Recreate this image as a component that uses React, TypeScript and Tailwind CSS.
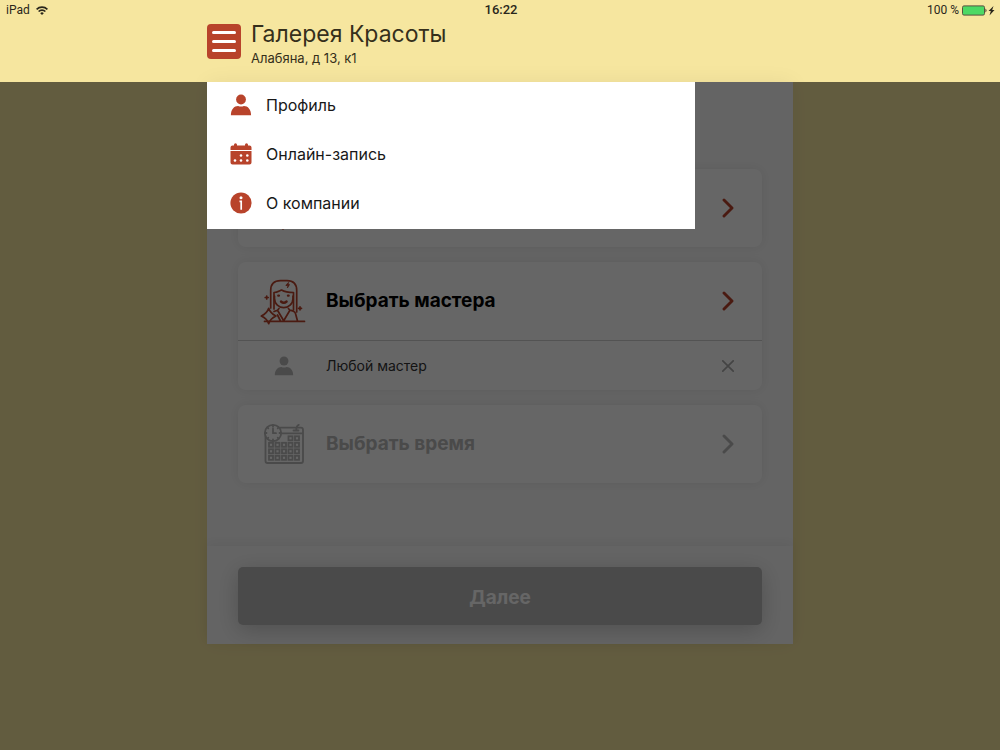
import type { ReactNode } from "react";

function Person({ className }: { className: string }) {
  return (
    <svg viewBox="0 0 22 22" className={className} fill="currentColor" aria-hidden="true">
      <circle cx="11" cy="5.500" r="4.900" />
      <path d="M.9 21.300c0-6 3.300-9.300 7.200-9.300 1.800.8 4 .8 5.800 0 3.900 0 7.200 3.300 7.200 9.300z" />
    </svg>
  );
}

function CalendarIcon() {
  return (
    <svg viewBox="0 0 22 22" className="size-[22px]" aria-hidden="true">
      <path fill="currentColor" d="M2.500 2.500H4V1.800a1.500 1.500 0 0 1 3 0v.7h8v-.7a1.500 1.500 0 0 1 3 0v.7h1.500a2 2 0 0 1 2 2V7h-21V4.500a2 2 0 0 1 2-2zM.5 8.100h21V19.500a2 2 0 0 1-2 2h-17a2 2 0 0 1-2-2z" />
      <g fill="#fff">
        <circle cx="11" cy="12.500" r="1.300" />
        <circle cx="17.300" cy="12.500" r="1.300" />
        <circle cx="5" cy="17.500" r="1.300" />
        <circle cx="11" cy="17.500" r="1.300" />
        <circle cx="17.300" cy="17.500" r="1.300" />
      </g>
    </svg>
  );
}

function InfoIcon() {
  return (
    <svg viewBox="0 0 22 22" className="size-[22px]" aria-hidden="true">
      <circle cx="11" cy="11" r="10.600" fill="currentColor" />
      <circle cx="11" cy="5.700" r="1.500" fill="#fff" />
      <path d="M9.500 9.300H11.200V17.800" fill="none" stroke="#fff" strokeWidth="1.700" />
    </svg>
  );
}

function Chevron() {
  return (
    <svg viewBox="0 0 12 20" className="h-5 w-3" fill="none" stroke="currentColor" strokeWidth="2.900" strokeLinecap="round" strokeLinejoin="round" aria-hidden="true">
      <path d="M2 2l8 8-8 8" />
    </svg>
  );
}

function MasterIcon() {
  return (
    <svg viewBox="0 0 44 44" className="size-11 overflow-visible" fill="none" stroke="currentColor" strokeWidth="1.700" strokeLinecap="round" strokeLinejoin="round" aria-hidden="true">
      <path d="M8.700 29V11.500Q8.700 1.700 18.500 1.700H25Q34.700 1.700 34.700 11.500V33" />
      <path d="M12 30V13.500M31.500 13.500V31M12 13.500C15 13.500 18 11.500 19.500 11 23 13 27 13.500 31.500 13.500" />
      <path d="M12.500 17V19.500C12.500 25 17 28.700 21.700 28.700S31 25 31 19.500V17" />
      <path d="M16.300 16.600h.6M26 16.600h.6M19 22.500q2.800 2.400 5.600 0" strokeWidth="2.400" />
      <path d="M26.500 3.800l-2.300 2.700 3-.8-1.700 2.600" strokeWidth="1.200" />
      <path d="M17 29.500l-1.500 1.700 6.200 10.500 6.200-10.500-1.500-1.700M15.500 31.200l-3.500 1.300M27.900 31.200q4.600.8 5.600 3.300l2 7.500M2.500 42.400H42.500M18.500 42l-3-6" />
      <path d="M6.700 29.300q1.500 5 7.300 7.700-5.800 2.700-7.300 7.700-1.500-5-7.400-7.700 5.900-2.700 7.400-7.700z" />
      <path d="M4.700 17v3M3.200 18.500h3M38 27.800v3M36.500 29.300h3" />
    </svg>
  );
}

function TimeIcon() {
  const cells: [number, number][] = [];
  for (let row = 0; row < 4; row++) {
    for (let col = row === 0 ? 3 : 0; col < 5; col++) cells.push([7 + col * 6.5, 14.3 + row * 6.5]);
  }
  return (
    <svg viewBox="0 0 44 44" className="size-11" fill="none" stroke="currentColor" strokeWidth="1.800" strokeLinejoin="round" strokeLinecap="round" aria-hidden="true">
      <path d="M3.500 14V39q0 2 2 2H39q2 0 2-2V7.700q0-2-2-2H18.500M19 11.300h22M36.800 2.800q-2.500.7-2.500 5M31.500 8.500h5" />
      <circle cx="11" cy="11" r="8.200" />
      <path d="M11 6.500v4.700h3M11 3.500v1M11 17.500v1M3.500 11h1M17.500 11h1M5.700 5.700l.6.600M16.300 5.700l-.6.600M5.700 16.300l.6-.6M16.300 16.300l-.6-.6" />
      {cells.map(([x, y]) => (
        <rect key={`${x}-${y}`} x={x} y={y} width="4" height="4" strokeLinejoin="miter" />
      ))}
    </svg>
  );
}

function Step({ icon, label, disabled = false }: { icon: ReactNode; label: string; disabled?: boolean }) {
  return (
    <button
      type="button"
      disabled={disabled}
      className={`flex h-[78px] w-full items-center pr-7 pl-6 text-left ${disabled ? "text-[#b8b8b8]" : "text-[#b8432b]"}`}
    >
      {icon}
      <span className={`ml-5 flex-1 text-[19px] font-bold ${disabled ? "" : "text-black"}`}>{label}</span>
      <Chevron />
    </button>
  );
}

const cardClass = "rounded-lg bg-white shadow-[0_0_12px_rgba(0,0,0,0.08)]";

export default function App() {
  const menu = [
    { label: "Профиль", icon: <Person className="size-[22px]" /> },
    { label: "Онлайн-запись", icon: <CalendarIcon /> },
    { label: "О компании", icon: <InfoIcon /> },
  ];
  return (
    <div className="flex min-h-screen flex-col bg-[#f6e69f] font-['Inter',sans-serif]">
      <header className="h-[82px]">
        <div className="grid h-5 grid-cols-3 items-center pr-1 pl-[6px] font-['Roboto',sans-serif] text-xs text-[#29261b]">
          <div className="flex items-center gap-[6px]">
            <span>iPad</span>
            <svg viewBox="0 0 12 9" className="h-[9px] w-3" fill="none" stroke="currentColor" strokeWidth="1.600" aria-hidden="true">
              <path d="M.6 3.400a7.600 7.600 0 0 1 10.800 0M2.600 5.500a4.800 4.800 0 0 1 6.800 0" />
              <path d="M6 9L4.200 7.200a2.600 2.600 0 0 1 3.600 0z" fill="currentColor" stroke="none" />
            </svg>
          </div>
          <span className="text-center text-[13px] font-medium">16:22</span>
          <div className="flex items-center justify-end gap-[3px]">
            <span>100 %</span>
            <svg viewBox="0 0 34 11" className="h-[11px] w-[34px]" aria-hidden="true">
              <rect x=".5" y=".9" width="22" height="9.200" rx="1.500" fill="#4cd964" stroke="#55523f" />
              <path d="M23.500 3.500q2 2 0 4z" fill="#29261b" />
              <path d="M31.500 1l-5 5h2.300l-1.300 4.500 5-5.500h-2.300z" fill="#29261b" />
            </svg>
          </div>
        </div>
        <div className="mx-auto flex w-full max-w-[586px] items-start gap-[10px]">
          <button type="button" aria-label="Меню" className="mt-1 flex h-[35px] w-[34px] flex-col items-center justify-center gap-[6px] rounded-[4px] bg-[#b8432b]">
            <span className="h-[3px] w-6 rounded-full bg-white" />
            <span className="h-[3px] w-6 rounded-full bg-white" />
            <span className="h-[3px] w-6 rounded-full bg-white" />
          </button>
          <div className="text-[#352f1b]">
            <h1 className="text-[23px] leading-7">Галерея Красоты</h1>
            <p className="text-[13px] leading-5">Алабяна, д 13, к1</p>
          </div>
        </div>
      </header>

      <div className="relative flex-1">
        <main className="mx-auto w-full max-w-[586px] bg-[#fafafa] shadow-[0_0_20px_rgba(0,0,0,0.06)]">
          <div className="flex flex-col gap-[15px] px-[31px] pt-[87px] pb-[63px]">
            <section className={cardClass}>
              <button type="button" aria-label="Услуги" className="flex h-[78px] w-full items-center justify-between pr-7 pl-6 text-[#b8432b]">
                <svg viewBox="0 0 44 44" className="size-11" fill="none" stroke="currentColor" strokeWidth="1.500" aria-hidden="true">
                  <circle cx="11" cy="10" r="5" />
                  <circle cx="31" cy="10" r="5" />
                  <path d="M14 14l9 28M28 14l-9 28M19 41q2 4 4 0" />
                </svg>
                <Chevron />
              </button>
            </section>
            <section className={cardClass}>
              <Step icon={<MasterIcon />} label="Выбрать мастера" />
              <div className="flex h-[50px] items-center border-t border-[#d0d0d0] pr-7 pl-9">
                <Person className="size-5 text-[#b8b8b8]" />
                <span className="ml-8 flex-1 text-sm text-[#333]">Любой мастер</span>
                <button type="button" aria-label="Удалить" className="text-[#aaa]">
                  <svg viewBox="0 0 12 12" className="size-3" stroke="currentColor" strokeWidth="1.700" strokeLinecap="round" aria-hidden="true">
                    <path d="M.8.8l10.400 10.400M11.200.8L.8 11.200" />
                  </svg>
                </button>
              </div>
            </section>
            <section className={cardClass}>
              <Step icon={<TimeIcon />} label="Выбрать время" disabled />
            </section>
          </div>
          <footer className="px-[31px] pt-[21px] pb-[19px] shadow-[0_-4px_10px_rgba(0,0,0,0.05)]">
            <button type="button" disabled className="h-[58px] w-full rounded-[5px] bg-[#b9b9b9] pt-1 text-[19px] font-bold text-white shadow-[0_5px_22px_rgba(0,0,0,0.2)]">
              Далее
            </button>
          </footer>
        </main>

        <div className="absolute inset-0 bg-black/60">
          <div className="mx-auto w-full max-w-[586px]">
            <nav className="w-10/12 bg-white">
              <ul>
                {menu.map((item) => (
                  <li key={item.label}>
                    <a href="#" className="flex h-[49px] items-center gap-[14px] px-[23px] pb-[3px] text-[#b8432b]">
                      {item.icon}
                      <span className="text-base text-[#181818]">{item.label}</span>
                    </a>
                  </li>
                ))}
              </ul>
            </nav>
          </div>
        </div>
      </div>
    </div>
  );
}
